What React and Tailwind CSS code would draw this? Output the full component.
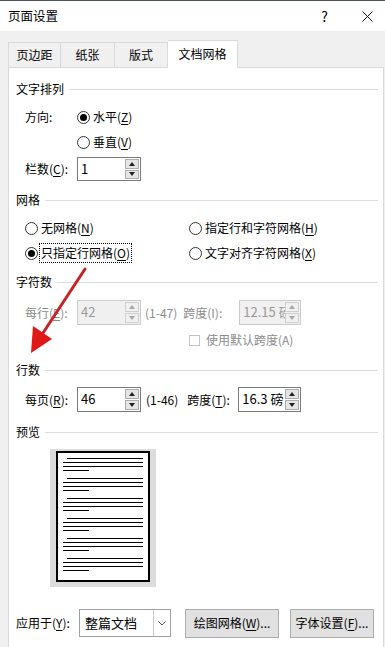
import React from 'react';

const U = ({ children }) => <span className="underline underline-offset-2">{children}</span>;

const Radio = ({ checked }) => (
    <span className="w-[13px] h-[13px] shrink-0 rounded-full border border-[#333] bg-white flex items-center justify-center">
        {checked && <span className="w-[7px] h-[7px] rounded-full bg-black" />}
    </span>
);

const Section = ({ title }) => (
    <div className="h-[16px] flex items-center gap-[5px]">
        <span className="leading-none">{title}</span>
        <span className="flex-1 h-px bg-[#dcdcdc]" />
    </div>
);

const Spin = ({ disabled }) => {
    const fill = disabled ? '#a8a8a8' : '#222';
    const btn = `flex-1 w-[14px] flex items-center justify-center border ${disabled ? 'border-[#cfcfcf] bg-[#f0f0f0]' : 'border-[#adadad] bg-[#e5e5e5]'}`;
    return (
        <div className="flex flex-col gap-px py-px pr-px">
            <div className={btn}>
                <svg width="6" height="4"><path d="M0 4 L3 0 L6 4Z" fill={fill} /></svg>
            </div>
            <div className={btn}>
                <svg width="6" height="4"><path d="M0 0 L3 4 L6 0Z" fill={fill} /></svg>
            </div>
        </div>
    );
};

const NumBox = ({ value, className, disabled }) => (
    <div className={`flex h-full border ${disabled ? 'border-[#cccccc] bg-[#f0f0f0] text-[#9a9a9a]' : 'border-[#7a7a7a] bg-white text-black'} ${className}`}>
        <span className="flex-1 min-w-0 pl-[3px] pt-[2px] text-[13px] leading-[18px] whitespace-nowrap overflow-hidden">{value}</span>
        <Spin disabled={disabled} />
    </div>
);

const Preview = () => {
    const groups = [0, 1, 2, 3, 4, 5];
    return (
        <div className="ml-[34px] w-[106px] h-[138px] bg-[#dcdcdc] pt-[2px] pl-[6px]">
            <div className="w-[94px] h-[131px] bg-white border-2 border-black pt-[5px] pl-[5px]">
                {groups.map((g) => (
                    <div key={g} className="h-[20px] flex flex-col gap-[3px]">
                        <div className="ml-[4px] w-[76px] h-px bg-black" />
                        <div className="w-[80px] h-px bg-black" />
                        <div className="w-[80px] h-px bg-black" />
                        <div className="w-[26px] h-px bg-black" />
                    </div>
                ))}
            </div>
        </div>
    );
};

const Tab = ({ label, active, className }) => (
    <div
        className={`flex items-center justify-center border border-[#d9d9d9] ${
            active ? 'h-[28px] bg-white border-b-white -mb-px relative z-10' : 'h-[25px] bg-[#f0f0f0] border-b-0'
        } ${className}`}
    >
        {label}
    </div>
);

export default function App() {
    return (
        <div
            className="relative w-[385px] h-[647px] overflow-hidden bg-[#f0f0f0] text-[12px] text-black border-t border-[#4a5458]"
            style={{ fontFamily: '"Noto Sans CJK SC", "Noto Sans", sans-serif' }}
        >
            {/* title bar */}
            <div className="h-[30px] bg-white flex items-center pl-[8px]">
                <span className="text-[12.5px]">页面设置</span>
                <span className="ml-auto mr-[34px] text-[14px]">?</span>
                <svg className="mr-[12px]" width="11" height="11" viewBox="0 0 11 11">
                    <path d="M0.5 0.5 L10.5 10.5 M10.5 0.5 L0.5 10.5" stroke="#111" strokeWidth="1" />
                </svg>
            </div>

            {/* tabs */}
            <div className="pt-[9px] pl-[8px] flex items-end">
                <Tab label="页边距" className="w-[53px]" />
                <Tab label="纸张" className="w-[54px] border-l-0" />
                <Tab label="版式" className="w-[53px] border-l-0" />
                <Tab label="文档网格" active className="w-[70px] border-l-0" />
            </div>

            {/* panel */}
            <div className="ml-[8px] w-[376px] h-[600px] bg-white border border-[#d9d9d9] pl-[7px] pr-[5px] pt-[13px] flex flex-col">
                <Section title="文字排列" />
                <div className="mt-[8px] h-[24px] flex items-center pl-[9px]">
                    <span className="w-[52px]">方向:</span>
                    <Radio checked />
                    <span className="ml-[3px]">水平(<U>Z</U>)</span>
                </div>
                <div className="mt-[1px] h-[24px] flex items-center pl-[61px]">
                    <Radio />
                    <span className="ml-[3px]">垂直(<U>V</U>)</span>
                </div>
                <div className="mt-[3px] h-[24px] flex items-center pl-[9px]">
                    <span className="w-[52px]">栏数(<U>C</U>):</span>
                    <NumBox value="1" className="w-[64px]" />
                </div>

                <div className="mt-[11px]">
                    <Section title="网格" />
                </div>
                <div className="mt-[8px] h-[24px] flex items-center pl-[9px]">
                    <div className="w-[164px] flex items-center">
                        <Radio />
                        <span className="ml-[3px]">无网格(<U>N</U>)</span>
                    </div>
                    <Radio />
                    <span className="ml-[3px]">指定行和字符网格(<U>H</U>)</span>
                </div>
                <div className="mt-[1px] h-[24px] flex items-center pl-[9px]">
                    <div className="w-[164px] flex items-center">
                        <Radio checked />
                        <span className="ml-px h-[20px] px-[1px] flex items-center border border-dotted border-black">
                            只指定行网格(<U>O</U>)
                        </span>
                    </div>
                    <Radio />
                    <span className="ml-[3px]">文字对齐字符网格(<U>X</U>)</span>
                </div>

                <div className="mt-[9px]">
                    <Section title="字符数" />
                </div>
                <div className="mt-[10px] h-[25px] flex items-center pl-[9px] text-[#8c8c8c]">
                    <span className="w-[52px]">每行(<U>E</U>):</span>
                    <NumBox value="42" disabled className="w-[64px]" />
                    <span className="ml-[4px]">(1-47)</span>
                    <span className="ml-[6px] w-[56px]">跨度(I):</span>
                    <NumBox value="12.15 磅" disabled className="w-[62px]" />
                </div>
                <div className="mt-[5px] h-[20px] flex items-center pl-[173px] text-[#8c8c8c]">
                    <span className="w-[11px] h-[11px] border border-[#c4c4c4] bg-white" />
                    <span className="ml-[6px]">使用默认跨度(A)</span>
                </div>

                <div className="mt-[12px]">
                    <Section title="行数" />
                </div>
                <div className="mt-[9px] h-[25px] flex items-center pl-[9px]">
                    <span className="w-[52px]">每页(<U>R</U>):</span>
                    <NumBox value="46" className="w-[64px]" />
                    <span className="ml-[5px]">(1-46)</span>
                    <span className="ml-[9px] w-[51px]">跨度(<U>T</U>):</span>
                    <NumBox value="16.3 磅" className="w-[63px]" />
                </div>

                <div className="mt-[12px]">
                    <Section title="预览" />
                </div>
                <div className="mt-[9px]">
                    <Preview />
                </div>

                <div className="mt-[21px] h-[30px] flex items-center">
                    <span className="w-[63px]">应用于(<U>Y</U>):</span>
                    <div className="h-[28px] w-[92px] flex border border-[#a0a0a0] bg-white">
                        <span className="flex-1 pl-[5px] flex items-center text-[13px]">整篇文档</span>
                        <span className="w-[17px] border-l border-[#c8c8c8] flex items-center justify-center">
                            <svg width="8" height="5" viewBox="0 0 8 5">
                                <path d="M0.5 0.5 L4 4 L7.5 0.5" fill="none" stroke="#555" strokeWidth="1" />
                            </svg>
                        </span>
                    </div>
                    <button className="ml-[14px] h-[29px] w-[94px] bg-[#e1e1e1] border border-[#adadad] flex items-center justify-center">
                        绘图网格(<U>W</U>)...
                    </button>
                    <button className="ml-[11px] h-[29px] w-[84px] bg-[#e1e1e1] border border-[#adadad] flex items-center justify-center">
                        字体设置(<U>F</U>)...
                    </button>
                </div>
            </div>

            {/* red annotation arrow */}
            <svg className="absolute left-0 top-0 pointer-events-none" width="385" height="647">
                <line x1="85" y1="268" x2="43" y2="332" stroke="#c62424" strokeWidth="3" strokeLinecap="round" />
                <polygon points="31,352 33,325 52,338" fill="#e01818" />
            </svg>
        </div>
    );
}
